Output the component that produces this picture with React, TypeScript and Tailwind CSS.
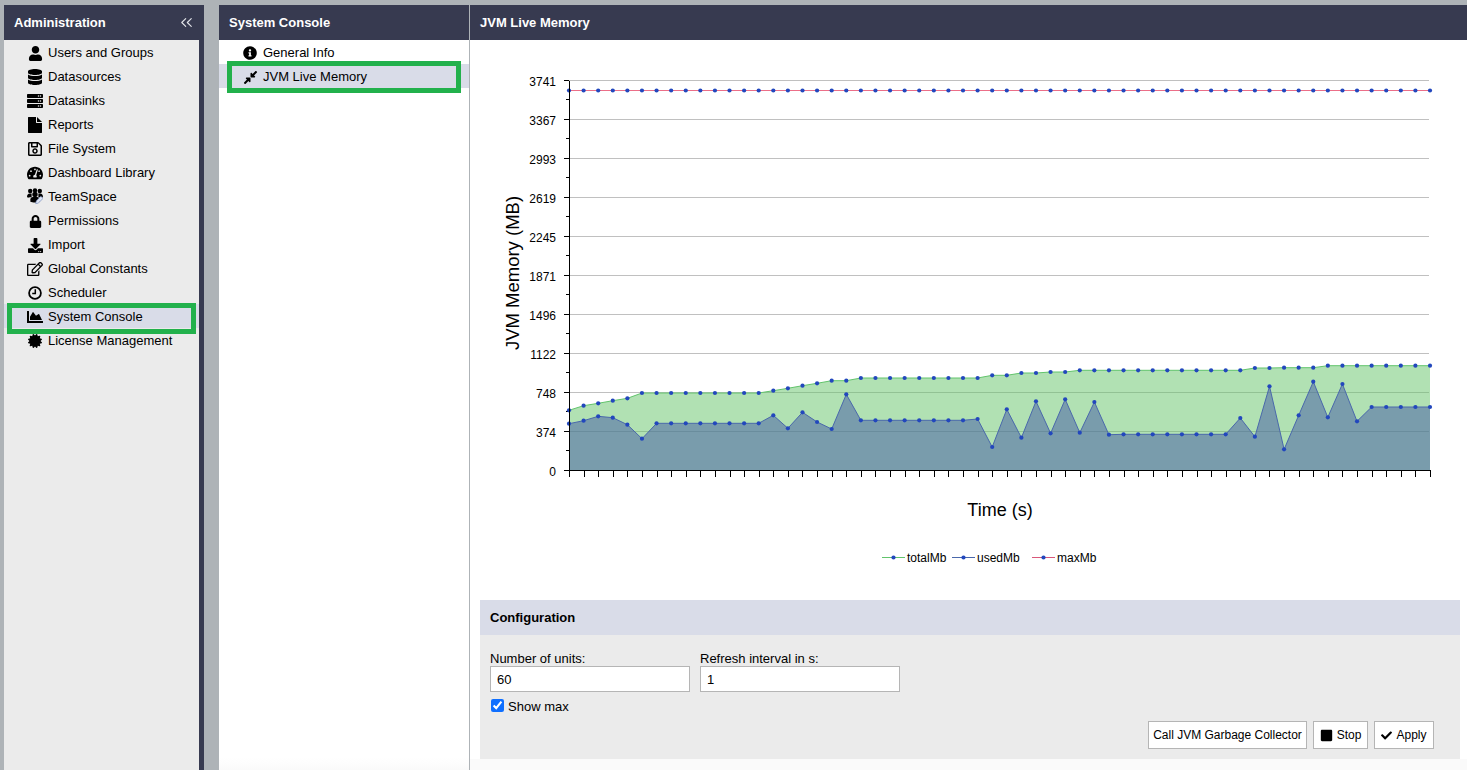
import React from "react";
import {
  FaUser, FaDatabase, FaServer, FaRegSave, FaTachometerAlt, FaLock, FaDownload,
  FaRegEdit, FaChartArea, FaCertificate, FaInfoCircle, FaCompressAlt, FaStop, FaCheck,
} from "react-icons/fa";
import { ChevronsLeft } from "lucide-react";

const font = { fontFamily: '"Liberation Sans", Arial, sans-serif' };

const X = (i: number) => 569 + (i * 861) / 59;
const rep = (v: number, n: number) => Array.from({ length: n }, () => v);

const total = [
  410.3, 405.7, 403.3, 400.7, 398.3, ...rep(393, 9), 390.7, 388.3, 385.7, 383.3, 380.7, 380.7, ...rep(378, 9),
  375.3, 375.3, 373, 373, 372, 372, ...rep(370.3, 12), 368, 368, 367.7, 367.7, 367.7, 365.7, ...rep(365.7, 7),
].slice(0, 60);
const used = [
  423.7, 420.7, 416.3, 417.7, 424.7, 438.7, ...rep(423.3, 8), 415.3, 428.3, 412.3, 422, 429, 394.3, ...rep(420.3, 8),
  419, 447, 409.3, 437.7, 401.3, 433.3, 399.3, 432.7, 402, 434.7, 434.3, 434.3, ...rep(434.3, 6), 418, 436.7, 386.3, 449.3,
  415.3, 381.7, 417.3, 384, 421.3, ...rep(407, 5),
];
const max = rep(90.5, 60);

const line = (a: number[]) => a.map((y, i) => `${X(i).toFixed(1)},${y}`).join(" ");
const area = (a: number[]) => `569,470.5 ${line(a)} 1430,470.5`;

const yLabels = ["3741", "3367", "2993", "2619", "2245", "1871", "1496", "1122", "748", "374", "0"];

function Chart() {
  return (
    <svg viewBox="470 40 997 555" className="block w-[997px] h-[555px] shrink-0" style={font}>
      {yLabels.map((l, i) => {
        const y = 80.5 + i * 39;
        return (
          <g key={l}>
            {i < 10 && <line x1={569} x2={1429} y1={y} y2={y} stroke="#c0c0c0" strokeWidth={1} />}
            <line x1={564} x2={569} y1={y} y2={y} stroke="#000" strokeWidth={1} />
            {i < 10 && <line x1={566} x2={569} y1={y + 19} y2={y + 19} stroke="#000" strokeWidth={1} />}
            <text x={556} y={y + 5} textAnchor="end" fontSize={12} fill="#000">{l}</text>
          </g>
        );
      })}
      <polygon points={area(total)} fill="#63c368" fillOpacity={0.5} />
      <polygon points={area(used)} fill="#4157a5" fillOpacity={0.5} />
      <polyline points={line(total)} fill="none" stroke="#62c46c" strokeWidth={1} />
      <polyline points={line(used)} fill="none" stroke="#4a68ab" strokeWidth={1} />
      <polyline points={line(max)} fill="none" stroke="#ec6f88" strokeWidth={1} />
      {[total, used, max].map((a, k) =>
        a.map((y, i) => <circle key={`${k}-${i}`} cx={X(i)} cy={y} r={2.1} fill="#2247bd" />)
      )}
      <line x1={569.5} x2={569.5} y1={81} y2={471} stroke="#000" strokeWidth={1} />
      <line x1={564} x2={1431} y1={470.5} y2={470.5} stroke="#000" strokeWidth={1} />
      {Array.from({ length: 60 }, (_, i) => (
        <line key={i} x1={Math.round(X(i)) + 0.5} x2={Math.round(X(i)) + 0.5} y1={471} y2={477} stroke="#000" strokeWidth={1} />
      ))}
      <text x={519} y={273} textAnchor="middle" fontSize={18.5} fill="#000" transform="rotate(-90 519 273)">JVM Memory (MB)</text>
      <text x={1000} y={516} textAnchor="middle" fontSize={18} fill="#000">Time (s)</text>
      {[
        { x: 882, c: "#62c46c", t: "totalMb" },
        { x: 952, c: "#4a68ab", t: "usedMb" },
        { x: 1032, c: "#d9587a", t: "maxMb" },
      ].map((l) => (
        <g key={l.t}>
          <line x1={l.x} x2={l.x + 23} y1={557.5} y2={557.5} stroke={l.c} strokeWidth={1} />
          <circle cx={l.x + 11.5} cy={557.5} r={2.1} fill="#2247bd" />
          <text x={l.x + 25} y={562} fontSize={12} fill="#000">{l.t}</text>
        </g>
      ))}
    </svg>
  );
}

function FileIcon() {
  return (
    <svg viewBox="0 0 14 16" className="w-[14px] h-[16px]" fill="#000">
      <path d="M0 0.5C0 0.2 0.2 0 0.5 0H8V5.5C8 5.8 8.2 6 8.5 6H14V15.5C14 15.8 13.8 16 13.5 16H0.5C0.2 16 0 15.8 0 15.5Z" />
      <path d="M9 0L14 5H9Z" />
    </svg>
  );
}

function ClockIcon() {
  return (
    <svg viewBox="0 0 14 14" className="w-[14px] h-[14px]" fill="none" stroke="#000">
      <circle cx="7" cy="7" r="5.9" strokeWidth="1.8" />
      <path d="M7.3 3.2V7.6H4.2" strokeWidth="1.5" />
    </svg>
  );
}

function TeamIcon() {
  return (
    <svg viewBox="0 0 18 18" className="w-[18px] h-[18px] -translate-y-[1px]">
      <g fill="#000">
        <circle cx="3.6" cy="3.4" r="2.5" />
        <circle cx="9" cy="2.7" r="2.5" />
        <circle cx="14.4" cy="3.4" r="2.5" />
        <path d="M0 10.5C0 7.6 1.2 6.3 3 6.3H5.2V10.5H2.5V11Z" />
        <path d="M18 10.5C18 7.6 16.8 6.3 15 6.3H12.8V10.5H15.5V11Z" />
        <circle cx="9" cy="7.3" r="3" />
        <path d="M3.8 15.5V13C3.8 11 5 10 6.6 10H11.4C13 10 14.2 11 14.2 13V15.5C12 16.6 6 16.6 3.8 15.5Z" />
      </g>
      <path d="M9.8 17.6L10.4 14.6L15.6 9.3L18 11.7L12.8 17Z" fill="#dfe6f5" stroke="#6f86b8" strokeWidth="0.7" />
    </svg>
  );
}

function Row({ icon, label, selected, box }: { icon: React.ReactNode; label: string; selected?: boolean; box?: string }) {
  return (
    <div className={`relative flex h-6 items-center pl-[23px] pt-[2px] text-[13px] text-black ${selected ? "bg-[#d9dce8]" : ""}`}>
      <span className="flex w-4 h-4 items-center justify-center shrink-0">{icon}</span>
      <span className="ml-[5px] whitespace-nowrap">{label}</span>
      {box && <div className={`absolute pointer-events-none border-[5px] border-[#22b14c] ${box}`} />}
    </div>
  );
}

function Header({ children, className = "" }: { children: React.ReactNode; className?: string }) {
  return (
    <div className={`flex h-[35px] shrink-0 items-center bg-[#373a50] text-[13px] font-bold text-white ${className}`}>
      {children}
    </div>
  );
}

const menu: { icon: React.ReactNode; label: string; selected?: boolean }[] = [
  { icon: <FaUser className="text-[15px]" />, label: "Users and Groups" },
  { icon: <FaDatabase className="text-[16px]" />, label: "Datasources" },
  { icon: <FaServer className="text-[16px]" />, label: "Datasinks" },
  { icon: <FileIcon />, label: "Reports" },
  { icon: <FaRegSave className="text-[16px]" />, label: "File System" },
  { icon: <FaTachometerAlt className="text-[16px]" />, label: "Dashboard Library" },
  { icon: <TeamIcon />, label: "TeamSpace" },
  { icon: <FaLock className="text-[13px]" />, label: "Permissions" },
  { icon: <FaDownload className="text-[15px]" />, label: "Import" },
  { icon: <FaRegEdit className="text-[16px]" />, label: "Global Constants" },
  { icon: <ClockIcon />, label: "Scheduler" },
  { icon: <FaChartArea className="text-[18px]" />, label: "System Console", selected: true },
  { icon: <FaCertificate className="text-[14px]" />, label: "License Management" },
];

const inputCls =
  "block w-[200px] h-[26px] border border-[#b5b5b5] bg-white px-[6px] text-[13px] text-black outline-none";
const btnCls =
  "flex h-[28px] items-center justify-center border border-[#b5b5b5] bg-white text-[12px] text-black";

export default function App() {
  return (
    <div className="flex h-[770px] w-[1467px] overflow-hidden bg-[#aeb3b7] pt-[5px]" style={font}>
      <aside className="ml-[4px] flex w-[200px] shrink-0 flex-col bg-[#373a50]">
        <Header className="justify-between pl-[10px] pr-[8px]">
          <span>Administration</span>
          <ChevronsLeft size={19} strokeWidth={1.4} className="text-[#e4e5ea]" />
        </Header>
        <div className="mr-[5px] flex-1 bg-[#ebebeb]">
          {menu.map((m) => (
            <Row
              key={m.label}
              icon={m.icon}
              label={m.label}
              selected={m.selected}
              box={m.selected ? "left-[3px] right-[3px] top-[-1px] bottom-[-6px]" : undefined}
            />
          ))}
        </div>
      </aside>

      <section className="ml-[15px] flex w-[250px] shrink-0 flex-col bg-white">
        <Header className="pl-[10px]">System Console</Header>
        <Row icon={<FaInfoCircle className="text-[14px]" />} label="General Info" />
        <Row
          icon={<FaCompressAlt className="text-[15px]" />}
          label="JVM Live Memory"
          selected
          box="left-[8px] right-[8px] top-[-3px] bottom-[-5px]"
        />
        <div className="mt-auto h-[12px] bg-gradient-to-b from-white to-[#fafafa]" />
      </section>

      <main className="ml-[1px] flex w-[997px] shrink-0 flex-col bg-white">
        <Header className="pl-[10px]">JVM Live Memory</Header>
        <Chart />
        <div className="mx-[10px] mt-[5px] flex w-[980px] flex-col">
          <div className="flex h-[35px] items-center bg-[#d9dce8] pl-[10px] text-[13px] font-bold text-black">
            Configuration
          </div>
          <div className="flex h-[124px] flex-col bg-[#ebebeb] px-[10px] text-[13px] text-black">
            <div className="mt-[16px] flex gap-[10px]">
              <label className="block">
                <span className="block h-[15px] leading-[15px]">Number of units:</span>
                <input className={inputCls} defaultValue="60" />
              </label>
              <label className="block">
                <span className="block h-[15px] leading-[15px]">Refresh interval in s:</span>
                <input className={inputCls} defaultValue="1" />
              </label>
            </div>
            <label className="mt-[7px] flex h-[13px] items-center pl-[1px]">
              <input type="checkbox" defaultChecked className="m-0 h-[13px] w-[13px] accent-[#0f6fff]" />
              <span className="ml-[4px] whitespace-nowrap pt-[2px]">Show max</span>
            </label>
            <div className="mt-[9px] flex justify-end gap-[6px] pr-[16px]">
              <button className={`${btnCls} w-[159px]`}>Call JVM Garbage Collector</button>
              <button className={`${btnCls} w-[55px] gap-[4px]`}>
                <FaStop className="text-[13px]" />
                Stop
              </button>
              <button className={`${btnCls} w-[60px] gap-[4px]`}>
                <FaCheck className="text-[11px]" />
                Apply
              </button>
            </div>
          </div>
        </div>
        <div className="flex-1 bg-[#fafafa]" />
      </main>
    </div>
  );
}
